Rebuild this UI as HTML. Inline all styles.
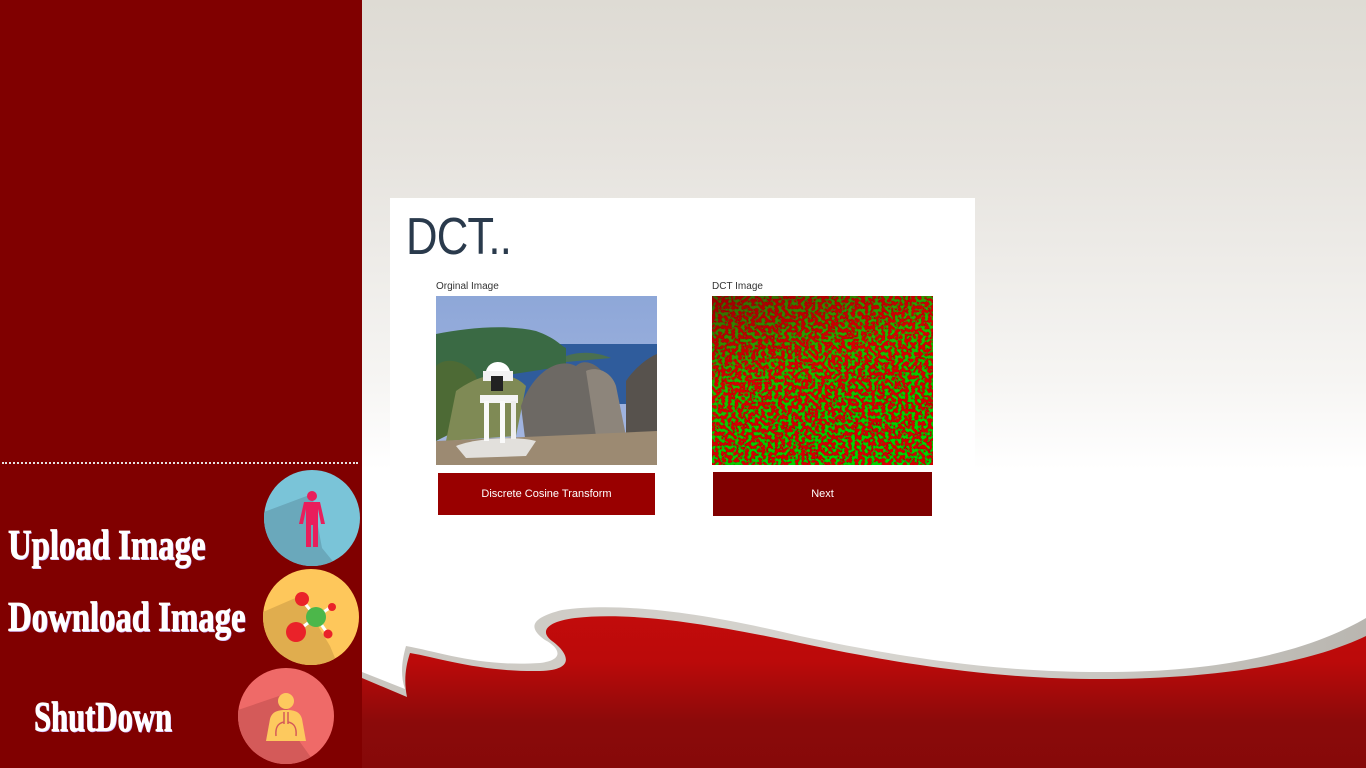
<!DOCTYPE html>
<html><head><meta charset="utf-8"><style>
html,body{margin:0;padding:0;width:1366px;height:768px;overflow:hidden;font-family:"Liberation Sans",sans-serif}
.bg{position:absolute;left:362px;top:0;width:1004px;height:768px;background:linear-gradient(#dedbd4 0px,#e6e3de 150px,#f6f5f3 380px,#fff 470px)}
.left{position:absolute;left:0;top:0;width:362px;height:768px;background:#800000}
.dots{position:absolute;left:2px;top:462px;width:356px;border-top:2px dotted #e8e0e0}
.lbl{position:absolute;color:#fff;font-family:"Liberation Serif",serif;font-weight:bold;font-size:42px;transform-origin:left top;transform:scaleX(0.78);white-space:nowrap;text-shadow:1px 1px 0 #c9b0ff;-webkit-text-stroke:0.8px #fff}
.card{position:absolute;left:390px;top:198px;width:585px;height:330px;background:#fff}
.title{position:absolute;left:406px;top:207px;font-size:52px;color:#2a3a4c;letter-spacing:-1px;transform-origin:left top;transform:scaleX(0.84)}
.cap{position:absolute;font-size:10px;color:#333;top:281px}
.btn{position:absolute;color:#fff;font-size:11px;display:flex;align-items:center;justify-content:center}
</style></head><body>
<div class="bg"></div>
<svg style="position:absolute;left:0;top:0" width="1366" height="768">
<defs>
<linearGradient id="rg" x1="0" y1="0" x2="0" y2="1"><stop offset="0" stop-color="#c20b0b"/><stop offset="0.3" stop-color="#bb0a0a"/><stop offset="0.7" stop-color="#8b0a0a"/><stop offset="1" stop-color="#860909"/></linearGradient>
<linearGradient id="gg" x1="0" y1="0" x2="1" y2="0"><stop offset="0" stop-color="#c9c6c0"/><stop offset="0.5" stop-color="#d8d6d1"/><stop offset="1" stop-color="#b9b6b0"/></linearGradient>
</defs>
<path d="M362,672 L405,689 C400,675 402,660 406,646 C440,652 480,667 540,663 C565,660 560,648 545,640 C528,628 530,618 562,610 C620,602 700,612 800,636 C950,668 1050,675 1150,671 C1250,666 1320,645 1366,618 L1366,768 L362,768 Z" fill="url(#gg)"/>
<path d="M362,678 L407,697 C404,682 405,668 410,653 C440,658 480,672 540,671 C580,670 565,650 552,641 C540,632 545,622 575,618 C630,612 700,622 800,643 C950,675 1050,682 1150,678 C1250,674 1320,658 1366,636 L1366,768 L362,768 Z" fill="url(#rg)"/>
</svg>
<div class="left"></div>
<div class="dots"></div>
<div class="lbl" style="left:8px;top:522px">Upload Image</div>
<div class="lbl" style="left:8px;top:594px">Download Image</div>
<div class="lbl" style="left:34px;top:694px;transform:scaleX(0.73)">ShutDown</div>
<svg style="position:absolute;left:0;top:0" width="362" height="768">
<defs>
<clipPath id="c1"><circle cx="312" cy="518" r="48"/></clipPath>
<clipPath id="c2"><circle cx="311" cy="617" r="48"/></clipPath>
<clipPath id="c3"><circle cx="286" cy="716" r="48"/></clipPath>
</defs>
<circle cx="312" cy="518" r="48" fill="#7ac4d8"/>
<path d="M312,494 L264,512 L264,570 L340,570 L322,548 Z" fill="#6aa8bb" clip-path="url(#c1)"/>
<circle cx="312" cy="496" r="5" fill="#e91e5c"/>
<path d="M304,502 h16 l5,22 h-4 l-3,-15 v38 h-5 v-22 h-2 v22 h-5 v-38 l-3,15 h-4 z" fill="#e91e5c"/>
<circle cx="311" cy="617" r="48" fill="#fec75b"/>
<path d="M300,596 L263,612 L263,670 L340,670 L330,646 Z" fill="#e0ad4e" clip-path="url(#c2)"/>
<g stroke="#fff" stroke-width="3"><line x1="302" y1="600" x2="316" y2="617"/><line x1="296" y1="632" x2="316" y2="617"/><line x1="331" y1="607" x2="316" y2="617"/><line x1="328" y1="634" x2="316" y2="617"/></g>
<circle cx="302" cy="599" r="7" fill="#ea2229"/>
<circle cx="296" cy="632" r="10" fill="#ea2229"/>
<circle cx="332" cy="607" r="4" fill="#ea2229"/>
<circle cx="328" cy="634" r="4.5" fill="#ea2229"/>
<circle cx="316" cy="617" r="10" fill="#4cb74a"/>
<circle cx="286" cy="716" r="48" fill="#ef6a68"/>
<path d="M282,695 L238,710 L238,770 L320,770 L300,742 Z" fill="#d45a59" clip-path="url(#c3)"/>
<circle cx="286" cy="701" r="8" fill="#fdc95e"/>
<path d="M266,741 L270,719 C272,711 279,710 286,710 C293,710 300,711 302,719 L306,741 Z" fill="#fdc95e"/>
<path d="M284,712 v12 M288,712 v12 M284,722 c-5,1 -9,4 -8,14 M288,722 c5,1 9,4 8,14" stroke="#d45a59" stroke-width="1.5" fill="none"/>
</svg>
<div class="card"></div>
<div class="title">DCT..</div>
<div class="cap" style="left:436px">Orginal Image</div>
<div class="cap" style="left:712px">DCT Image</div>
<svg style="position:absolute;left:436px;top:296px" width="221" height="169">
<defs><linearGradient id="sky" x1="0" y1="0" x2="0" y2="1"><stop offset="0" stop-color="#8ea7d8"/><stop offset="1" stop-color="#a6b8e2"/></linearGradient></defs>
<rect width="221" height="169" fill="url(#sky)"/>
<rect y="48" width="221" height="60" fill="#2f5c9c"/>
<path d="M0,38 C30,32 70,28 100,35 C120,42 125,50 130,52 L130,70 L0,90 Z" fill="#3a6a44"/>
<path d="M130,60 C145,55 160,56 175,62 L130,66 Z" fill="#4b7050"/>
<path d="M0,70 C10,60 30,65 40,80 L50,120 L0,145 Z" fill="#4d6a35"/>
<path d="M20,95 C40,80 70,70 90,90 L80,140 L10,145 Z" fill="#7f8a55"/>
<path d="M85,110 C95,80 120,60 140,70 C150,60 170,70 180,100 L185,150 L90,150 Z" fill="#6d6964"/>
<path d="M150,75 C160,70 175,75 180,90 L190,140 L160,140 Z" fill="#8d857b"/>
<path d="M190,85 C200,70 215,60 221,58 L221,150 L190,150 Z" fill="#57524d"/>
<path d="M0,145 L221,135 L221,169 L0,169 Z" fill="#9c8a72"/>
<path d="M20,150 C40,142 80,140 100,145 L90,160 L30,162 Z" fill="#e2e0dc"/>
<rect x="47" y="75" width="30" height="10" fill="#f2f2f2"/>
<path d="M50,75 C52,68 58,66 62,66 C66,66 72,68 74,75 Z" fill="#fff"/>
<rect x="55" y="80" width="12" height="15" fill="#222"/>
<rect x="44" y="99" width="38" height="8" fill="#f4f4f4"/>
<rect x="48" y="105" width="5" height="40" fill="#fafafa"/>
<rect x="64" y="105" width="5" height="42" fill="#fafafa"/>
<rect x="75" y="105" width="5" height="38" fill="#eee"/>
</svg>
<svg style="position:absolute;left:712px;top:296px" width="221" height="169">
<defs>
<filter id="nz" x="0" y="0" width="100%" height="100%">
<feTurbulence type="fractalNoise" baseFrequency="0.3" numOctaves="1" seed="3"/>
<feColorMatrix type="matrix" values="9 0 0 0 -4.1  -9 0 0 0 4.6  0 0 0 0 0  0 0 0 0 1"/>
</filter>
<linearGradient id="ov" x1="0" y1="0" x2="0.4" y2="1"><stop offset="0" stop-color="#600000" stop-opacity="0.6"/><stop offset="0.5" stop-color="#900000" stop-opacity="0.2"/><stop offset="1" stop-color="#000" stop-opacity="0.1"/></linearGradient>
</defs>
<rect width="221" height="169" fill="#000"/>
<rect width="221" height="169" filter="url(#nz)" opacity="0.92"/>
<rect width="221" height="169" fill="url(#ov)"/>
</svg>
<div class="btn" style="left:438px;top:473px;width:217px;height:42px;background:#990000">Discrete Cosine Transform</div>
<div class="btn" style="left:713px;top:472px;width:219px;height:44px;background:#800000">Next</div>
</body></html>
